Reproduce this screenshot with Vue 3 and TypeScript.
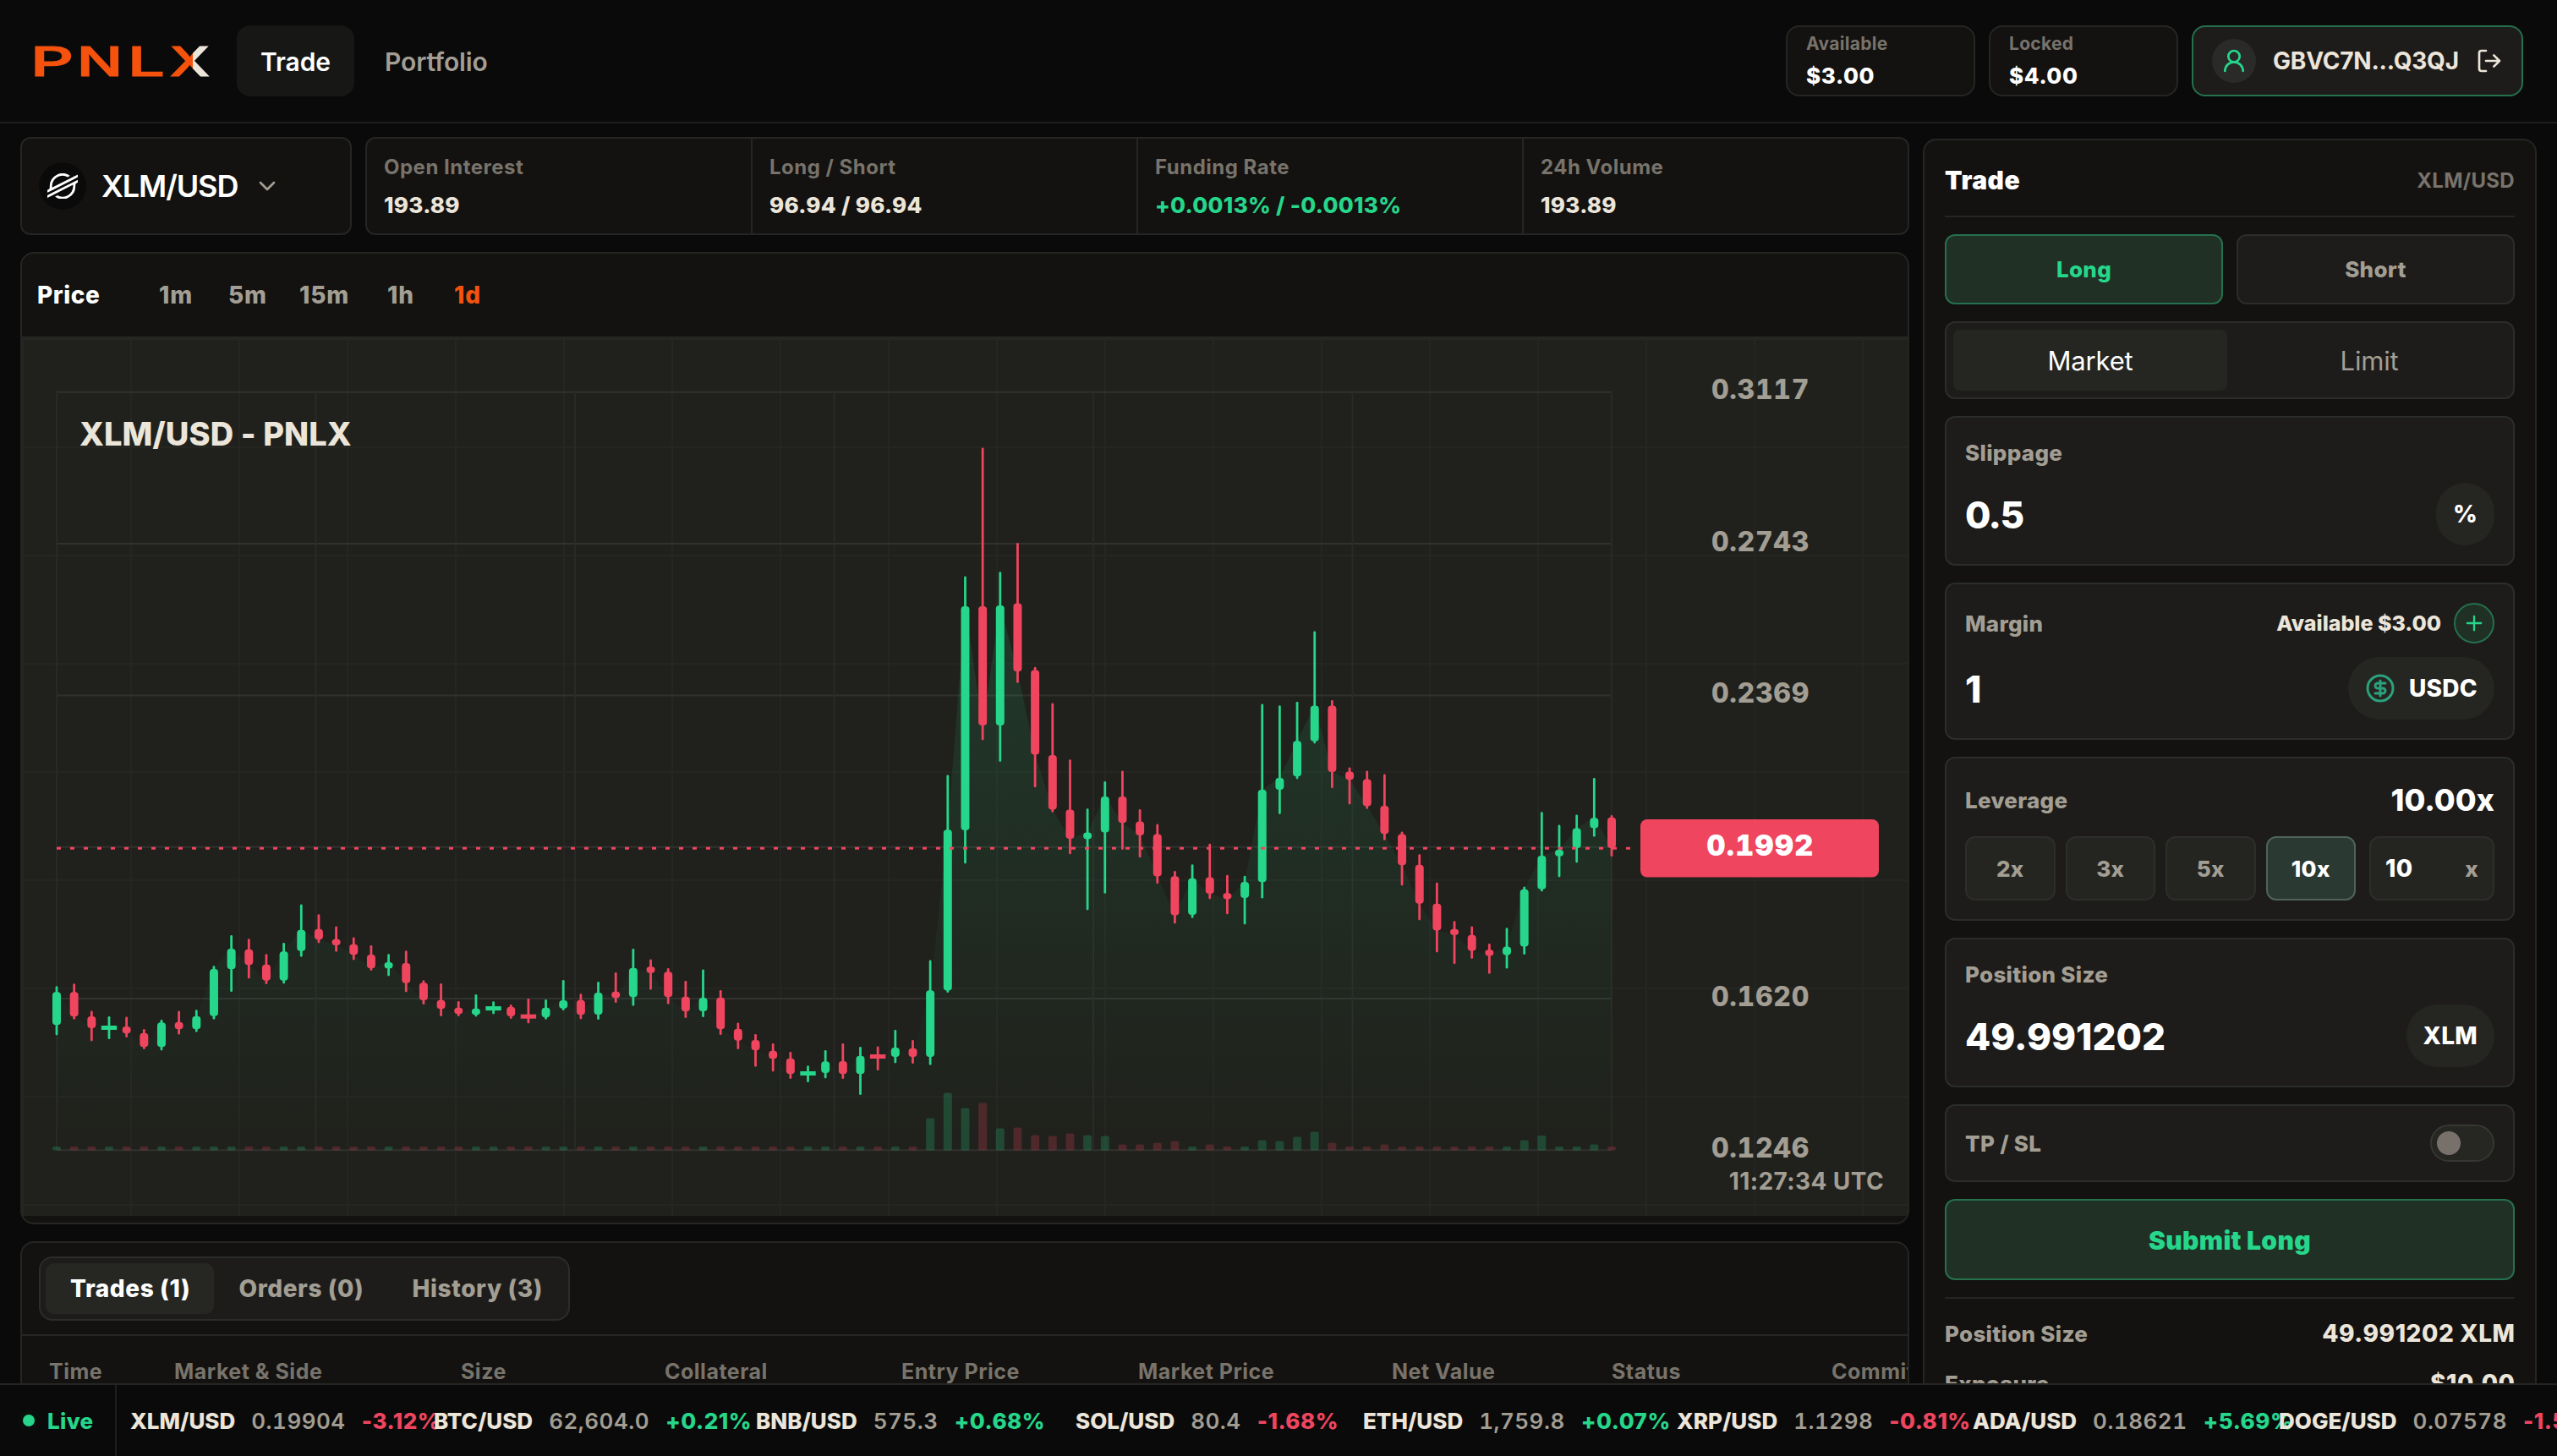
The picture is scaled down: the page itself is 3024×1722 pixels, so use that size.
<script setup lang="ts">
type Side = 'g' | 'r'
type Candle = [side: Side, high: number, top: number, bottom: number, low: number]

const stats = [
  { label: 'Open Interest', value: '193.89', up: false },
  { label: 'Long / Short', value: '96.94 / 96.94', up: false },
  { label: 'Funding Rate', value: '+0.0013% / -0.0013%', up: true },
  { label: '24h Volume', value: '193.89', up: false },
]

const frames = ['1m', '5m', '15m', '1h', '1d']
const tabs = ['Trades (1)', 'Orders (0)', 'History (3)']
const columns = ['Time', 'Market & Side', 'Size', 'Collateral', 'Entry Price', 'Market Price', 'Net Value', 'Status', 'Commitment']
const leverages = ['2x', '3x', '5x', '10x']

const tickers = [
  { pair: 'XLM/USD', price: '0.19904', change: '-3.12%', width: 359 },
  { pair: 'BTC/USD', price: '62,604.0', change: '+0.21%', width: 381 },
  { pair: 'BNB/USD', price: '575.3', change: '+0.68%', width: 378 },
  { pair: 'SOL/USD', price: '80.4', change: '-1.68%', width: 340 },
  { pair: 'ETH/USD', price: '1,759.8', change: '+0.07%', width: 371 },
  { pair: 'XRP/USD', price: '1.1298', change: '-0.81%', width: 350 },
  { pair: 'ADA/USD', price: '0.18621', change: '+5.69%', width: 362 },
  { pair: 'DOGE/USD', price: '0.07578', change: '-1.52%', width: 380 },
]

// Daily candles in chart canvas units.
const candles: Candle[] = [
  ['g', 1167.7, 1173.3, 1212.3, 1223], ['r', 1164.7, 1173.3, 1202.3, 1204.3], ['r', 1197, 1202, 1216, 1230],
  ['g', 1203.3, 1215.3, 1215.9, 1227.7], ['r', 1204, 1214, 1222.3, 1225.7], ['r', 1218.3, 1221.7, 1238.3, 1239.7],
  ['g', 1207.3, 1209.3, 1238.3, 1241], ['r', 1197, 1208.7, 1217.3, 1222.3], ['g', 1195.7, 1201.7, 1217.3, 1219.3],
  ['g', 1143.7, 1146, 1201.7, 1204.3], ['g', 1107.3, 1122, 1146.3, 1171.7], ['r', 1111.7, 1122.7, 1141.3, 1156],
  ['r', 1129.7, 1140.7, 1159.7, 1162.7], ['g', 1116.3, 1125.3, 1159.7, 1162], ['g', 1071, 1099.7, 1124.7, 1130.3],
  ['r', 1082.7, 1098.7, 1111.3, 1114], ['r', 1097, 1110.7, 1118, 1124.3], ['r', 1110, 1116.7, 1129.3, 1134],
  ['r', 1119.3, 1129, 1145.3, 1146.7], ['g', 1129.7, 1138, 1145.3, 1153], ['r', 1125.7, 1139, 1162.7, 1172],
  ['r', 1160.7, 1162.3, 1183, 1186.7], ['r', 1164.3, 1182.7, 1193.3, 1200.7], ['r', 1185.3, 1191.7, 1199.3, 1200.7],
  ['g', 1177.3, 1192.7, 1200.3, 1201], ['g', 1185.7, 1192.4, 1192.8, 1198], ['r', 1189.3, 1190.7, 1202, 1203.7],
  ['r', 1182.3, 1202, 1202.4, 1209], ['g', 1183.3, 1191.7, 1203.3, 1204.3], ['g', 1160.3, 1183, 1192.7, 1193.7],
  ['r', 1176.7, 1182.7, 1200.3, 1204], ['g', 1162.3, 1174, 1200, 1204.7], ['r', 1151.3, 1172.7, 1180.3, 1184.7],
  ['g', 1123.3, 1144.7, 1179.3, 1188.3], ['r', 1136, 1143.3, 1150.7, 1169.3], ['r', 1146.3, 1149.3, 1179.3, 1186.3],
  ['r', 1161.3, 1178.7, 1196.3, 1202.7], ['g', 1148, 1180, 1196, 1201.7], ['r', 1172.3, 1179.7, 1217.3, 1222.7],
  ['r', 1211, 1216.7, 1230.7, 1239.7], ['r', 1224.3, 1230, 1242.3, 1260.3], ['r', 1235.3, 1242.7, 1252.3, 1266],
  ['r', 1245.3, 1251.7, 1270.3, 1274.7], ['g', 1261.7, 1269.3, 1269.7, 1278.7], ['g', 1243.3, 1255.3, 1269, 1274],
  ['r', 1235.3, 1255, 1270.3, 1274.7], ['g', 1239.3, 1248.7, 1270.3, 1293.7], ['r', 1239, 1249.3, 1249.7, 1264.7],
  ['g', 1219.3, 1239, 1250, 1256], ['r', 1231.3, 1239.7, 1250, 1256.7], ['g', 1137, 1171.3, 1250, 1258.3],
  ['g', 917.9, 981.3, 1171.6, 1172.7], ['g', 683, 717, 982.1, 1020.1], ['r', 530.8, 717, 858, 874.1],
  ['g', 677.7, 716.1, 858, 899.6], ['r', 643.3, 713.4, 794.2, 806.3], ['r', 790.2, 792.4, 892.4, 929.9],
  ['r', 833, 892.9, 957.6, 959.4], ['r', 899.6, 957.6, 992, 1008.9], ['g', 957.6, 984.4, 992.4, 1075],
  ['g', 925.4, 942, 984.4, 1055.4], ['r', 912.9, 942, 973.2, 1003.6], ['r', 958.5, 971.4, 987.9, 1012.9],
  ['r', 975.9, 986.6, 1036.6, 1043.8], ['r', 1031.3, 1036.2, 1082.6, 1091.1], ['g', 1023.7, 1038.8, 1082.1, 1084.4],
  ['r', 999.1, 1037.5, 1057.1, 1062.1], ['r', 1036.2, 1056.3, 1063.4, 1079.9], ['g', 1037.1, 1042.9, 1062.1, 1092],
  ['g', 833.9, 933.9, 1043.3, 1061.2], ['g', 835.7, 920.1, 933.9, 961.6], ['g', 831.3, 876.3, 918.3, 920.1],
  ['g', 747.8, 834.4, 876.8, 878.1], ['r', 829.5, 834.4, 912.9, 930.8], ['r', 908.9, 912.5, 922.3, 950],
  ['r', 912.9, 921.4, 953.6, 955.4], ['r', 917, 953.1, 986.2, 992.4], ['r', 984.8, 986.6, 1023.2, 1046],
  ['r', 1011.6, 1022.8, 1068.8, 1087.1], ['r', 1045.1, 1068.8, 1100.4, 1125], ['r', 1090.6, 1098.7, 1105.8, 1138.8],
  ['r', 1096.9, 1105.8, 1124.6, 1132.6], ['r', 1117.4, 1123.2, 1130.4, 1150.4], ['g', 1098.7, 1119.6, 1129.5, 1144.2],
  ['g', 1050, 1051.8, 1119.6, 1127.7], ['g', 961.6, 1012.1, 1051.8, 1053.1], ['g', 976.9, 1004.9, 1012.7, 1036.1],
  ['g', 964.9, 979.6, 1003, 1019.1], ['g', 921.3, 967.2, 979.6, 988.3], ['r', 965.4, 966.8, 1003, 1011.8],
]

const volumes: Record<number, number> = {
  50: 38, 51: 68, 52: 50, 53: 56, 54: 26, 55: 27, 56: 18, 57: 17, 58: 20, 59: 18, 60: 17, 61: 7, 62: 7, 63: 9,
  64: 11, 66: 7, 69: 12, 70: 11, 71: 16, 72: 22, 73: 9, 76: 7, 84: 12, 85: 17.5, 88: 7,
}

const LEFT = 67
const RIGHT = 1906
const BASE = 1360.5
const step = (RIGHT - LEFT) / (candles.length - 1)
const green = '#26d68a'
const red = '#f0455f'

const bars = candles.map(([side, high, top, bottom, low], i) => {
  const flat = bottom - top < 1
  const w = flat ? 18.4 : 10
  const h = flat ? 5 : bottom - top
  const x = LEFT + i * step
  return {
    x,
    high,
    low,
    w,
    h,
    y: top,
    rx: flat ? 0 : Math.min(4, h / 2),
    color: side === 'g' ? green : red,
    close: side === 'g' ? top : bottom,
    vol: volumes[i] ?? 4.6,
  }
})

const area = `M${LEFT} ${BASE} ` + bars.map((b) => `L${b.x.toFixed(1)} ${b.close}`).join(' ') + ` L${RIGHT} ${BASE}Z`
const gridY = [0, 1, 2, 3, 4, 5].map((k) => 463.8 + k * 179.3)
const gridX = [0, 1, 2, 3, 4, 5, 6].map((k) => LEFT + k * 306.5)
const axis = [
  { text: '0.3117', y: 472 },
  { text: '0.2743', y: 651.5 },
  { text: '0.2369', y: 831 },
  { text: '0.1620', y: 1189.5 },
  { text: '0.1246', y: 1369 },
]
</script>

<template>
  <div class="app">
    <header class="top">
      <svg class="logo" width="212" height="76" viewBox="36 34 212 76" role="img" aria-label="PNLX">
        <defs>
          <linearGradient id="split" x1="0" x2="1" y1="0" y2="0">
            <stop offset="0.58" stop-color="#f4520d" />
            <stop offset="0.58" stop-color="#ece5da" />
          </linearGradient>
        </defs>
        <g class="word">
          <text x="36" y="89.5" textLength="51" lengthAdjust="spacingAndGlyphs">P</text>
          <text x="91" y="89.5" textLength="54" lengthAdjust="spacingAndGlyphs">N</text>
          <text x="151" y="89.5" textLength="44" lengthAdjust="spacingAndGlyphs">L</text>
          <text class="mark" x="201" y="89.5" textLength="47" lengthAdjust="spacingAndGlyphs">X</text>
        </g>
      </svg>
      <nav class="nav">
        <a class="nav-item on">Trade</a>
        <a class="nav-item">Portfolio</a>
      </nav>
      <div class="account">
        <div class="balance"><span>Available</span><b>$3.00</b></div>
        <div class="balance"><span>Locked</span><b>$4.00</b></div>
        <button class="wallet">
          <i class="avatar">
            <svg width="32" height="32" viewBox="0 0 24 24" class="line"><circle cx="12" cy="8" r="5" /><path d="M20 21a8 8 0 0 0-16 0" /></svg>
          </i>
          <span>GBVC7N...Q3QJ</span>
          <svg width="32" height="32" viewBox="0 0 24 24" class="line"><path d="M9 21H5a2 2 0 0 1-2-2V5a2 2 0 0 1 2-2h4M16 17l5-5-5-5M21 12H9" /></svg>
        </button>
      </div>
    </header>

    <main class="main">
      <section class="left">
        <div class="market">
          <button class="pair">
            <i class="coin">
              <svg width="36" height="30.5" viewBox="0 0 236.36 200" fill="#fff">
                <path d="M203,26.16l-28.46,14.5-137.43,70a82.49,82.49,0,0,1-.7-10.69A81.87,81.87,0,0,1,158.2,28.6l16.29-8.3,2.43-1.24A100,100,0,0,0,18.18,100q0,3.82.29,7.61a18.19,18.19,0,0,1-9.88,17.58L0,129.57V150l25.29-12.89,0,0,8.19-4.18,8.07-4.11v0L186.43,55l16.28-8.29,33.65-17.15V9.14Z" />
                <path d="M236.36,50,49.78,145,33.5,153.31,0,170.38v20.41l33.27-16.95,28.46-14.5L199.3,89.24A83.45,83.45,0,0,1,200,100,81.87,81.87,0,0,1,78.09,171.36l-1,.53-17.66,9A100,100,0,0,0,218.18,100c0-2.57-.1-5.14-.29-7.68a18.2,18.2,0,0,1,9.87-17.58l8.6-4.38Z" />
              </svg>
            </i>
            <span>XLM/USD</span>
            <svg width="32" height="32" viewBox="0 0 24 24" class="line chev"><path d="m6 9 6 6 6-6" /></svg>
          </button>
          <div class="stats">
            <div v-for="s in stats" :key="s.label" class="stat">
              <span>{{ s.label }}</span>
              <b :class="{ up: s.up }">{{ s.value }}</b>
            </div>
          </div>
        </div>

        <div class="panel chart-panel">
          <div class="chart-head">
            <b>Price</b>
            <div class="frames">
              <span v-for="f in frames" :key="f" :class="{ on: f === '1d' }">{{ f }}</span>
            </div>
          </div>
          <div class="canvas">
            <svg width="2230" height="1038" viewBox="26 400 2230 1038">
              <defs>
                <linearGradient id="fade" gradientUnits="userSpaceOnUse" x1="0" x2="0" y1="717" y2="1345">
                  <stop offset="0" stop-color="#26d68a" stop-opacity="0.13" />
                  <stop offset="1" stop-color="#26d68a" stop-opacity="0" />
                </linearGradient>
              </defs>
              <g stroke="#31322f" stroke-width="2">
                <line v-for="y in gridY" :key="y" :x1="LEFT" :x2="RIGHT" :y1="y" :y2="y" />
              </g>
              <g stroke="#292a27" stroke-width="2">
                <line v-for="x in gridX" :key="x" :x1="x" :x2="x" y1="464" y2="1360" />
              </g>
              <path :d="area" fill="url(#fade)" />
              <rect v-for="(b, i) in bars" :key="'v' + i" :x="b.x - 5" :y="BASE - b.vol" width="10" :height="b.vol" rx="2" :fill="b.color" opacity="0.22" />
              <g v-for="(b, i) in bars" :key="'c' + i">
                <line :x1="b.x" :x2="b.x" :y1="b.high" :y2="b.low" :stroke="b.color" stroke-width="2.8" stroke-linecap="round" />
                <rect :x="b.x - b.w / 2" :y="b.y - (b.w > 12 ? 2.3 : 0)" :width="b.w" :height="b.h" :rx="b.rx" :fill="b.color" />
              </g>
              <line x1="67" x2="1937" y1="1003.3" y2="1003.3" :stroke="red" stroke-width="3" stroke-dasharray="5 11" />
              <text class="title" x="94" y="527">XLM/USD - PNLX</text>
              <text v-for="a in axis" :key="a.text" class="tick" x="2082" :y="a.y">{{ a.text }}</text>
              <rect x="1940" y="969" width="282" height="68.5" rx="8" :fill="red" />
              <text class="tick last" x="2082" y="1012">0.1992</text>
              <text class="clock" x="2228" y="1407">11:27:34 UTC</text>
            </svg>
          </div>
        </div>

        <div class="panel trades">
          <div class="trades-head">
            <div class="tabs">
              <span v-for="(t, i) in tabs" :key="t" :class="{ on: i === 0 }">{{ t }}</span>
            </div>
          </div>
          <div class="cols">
            <span v-for="c in columns" :key="c">{{ c }}</span>
          </div>
        </div>
      </section>

      <aside class="panel ticket">
        <div class="ticket-head"><b>Trade</b><span>XLM/USD</span></div>
        <div class="sides">
          <button class="long">Long</button>
          <button class="short">Short</button>
        </div>
        <div class="kinds"><span class="on">Market</span><span>Limit</span></div>
        <div class="card">
          <div class="row">Slippage</div>
          <div class="entry"><b class="tight">0.5</b><span class="pill">%</span></div>
        </div>
        <div class="card">
          <div class="row tall">
            Margin
            <span class="avail">Available $3.00
              <i class="plus"><svg width="28" height="28" viewBox="0 0 24 24" class="line"><path d="M5 12h14M12 5v14" /></svg></i>
            </span>
          </div>
          <div class="entry">
            <b>1</b>
            <span class="pill">
              <svg width="36" height="36" viewBox="0 0 24 24" class="line usdc"><circle cx="12" cy="12" r="10" /><path d="M16 8h-6a2 2 0 1 0 0 4h4a2 2 0 1 1 0 4H8M12 18V6" /></svg>
              USDC
            </span>
          </div>
        </div>
        <div class="card">
          <div class="row lev">Leverage<b>10.00x</b></div>
          <div class="levers">
            <span v-for="l in leverages" :key="l" :class="['lever', { on: l === '10x' }]">{{ l }}</span>
            <span class="custom"><b>10</b><i>x</i></span>
          </div>
        </div>
        <div class="card">
          <div class="row">Position Size</div>
          <div class="entry"><b>49.991202</b><span class="pill">XLM</span></div>
        </div>
        <div class="card tpsl">TP / SL<i class="toggle"></i></div>
        <button class="submit">Submit Long</button>
        <div class="summary">
          <div><span>Position Size</span><b>49.991202 XLM</b></div>
          <div><span>Exposure</span><b>$10.00</b></div>
        </div>
      </aside>
    </main>

    <footer class="ticker">
      <div class="live"><i></i>Live</div>
      <div class="tape">
        <div v-for="t in tickers" :key="t.pair" class="quote" :style="{ width: t.width + 'px' }">
          <b>{{ t.pair }}</b>
          <span>{{ t.price }}</span>
          <em :class="{ down: t.change[0] === '-' }">{{ t.change }}</em>
        </div>
      </div>
    </footer>
  </div>
</template>

<style>
body {
  background: #0a0a0a;
}
</style>

<style scoped>
* {
  box-sizing: border-box;
}
.app {
  display: flex;
  flex-direction: column;
  width: 3024px;
  height: 1722px;
  overflow: hidden;
  background: #0a0a0a;
  color: #ece5da;
  font-family: Inter, sans-serif;
  font-size: 26px;
  font-weight: 800;
  letter-spacing: 0.3px;
  white-space: nowrap;
}
i,
em {
  font-style: normal;
}
b {
  font-weight: 800;
}
button {
  font: inherit;
  letter-spacing: inherit;
  color: inherit;
  padding: 0;
}
svg {
  display: block;
  flex: none;
}
.line {
  fill: none;
  stroke: currentColor;
  stroke-width: 2;
  stroke-linecap: round;
  stroke-linejoin: round;
}
.top {
  display: flex;
  align-items: center;
  flex: none;
  height: 146px;
  padding: 0 40px 0 36px;
  border-bottom: 2px solid #1e1f1d;
}
.word {
  font-size: 48.5px;
  font-weight: 500;
  letter-spacing: 0;
  fill: #f4520d;
  stroke: #f4520d;
  stroke-width: 1.2;
}
.mark {
  fill: url(#split);
  stroke: url(#split);
}
.nav {
  display: flex;
  gap: 8px;
  margin-left: 32px;
}
.nav-item {
  display: flex;
  align-items: center;
  height: 84px;
  padding: 2px 28px 0;
  border-radius: 16px;
  font-size: 30px;
  font-weight: 600;
  letter-spacing: -0.1px;
  color: #a39e93;
}
.nav-item.on {
  background: #171715;
  color: #fff;
}
.account {
  display: flex;
  gap: 16px;
  margin-left: auto;
}
.balance {
  display: flex;
  flex-direction: column;
  width: 224px;
  height: 84px;
  padding: 6px 22px 0;
  border: 2px solid #252623;
  border-radius: 16px;
  background: #131210;
}
.balance span {
  line-height: 28px;
  font-size: 21px;
  font-weight: 700;
  color: #78736b;
}
.balance b {
  line-height: 48px;
  letter-spacing: 0.6px;
  color: #fff;
}
.wallet {
  display: flex;
  align-items: center;
  width: 392px;
  height: 84px;
  padding: 0 22px;
  border: 2px solid #25704d;
  border-radius: 16px;
  background: #1d1c1a;
  font-size: 28px;
  font-weight: 700;
  letter-spacing: -0.2px;
}
.wallet > svg {
  margin-left: auto;
}
.avatar {
  display: flex;
  align-items: center;
  justify-content: center;
  width: 52px;
  height: 52px;
  margin-right: 20px;
  border-radius: 50%;
  background: #2a2a28;
  color: #26d68a;
}
.main {
  display: flex;
  flex: 1;
  min-height: 0;
  gap: 16px;
  padding: 16px 24px 0;
  overflow: hidden;
}
.left {
  width: 2234px;
  flex: none;
}
.panel {
  border: 2px solid #252623;
  border-radius: 16px;
  background: #131210;
}
.market {
  display: flex;
  gap: 16px;
}
.pair {
  display: flex;
  align-items: center;
  width: 392px;
  height: 116px;
  padding-left: 20px;
  border: 2px solid #252623;
  border-radius: 12px;
  background: #131210;
  font-size: 36px;
  font-weight: 600;
  letter-spacing: -1.1px;
  color: #fff;
}
.coin {
  display: flex;
  align-items: center;
  justify-content: center;
  width: 56px;
  height: 56px;
  margin-right: 18px;
  border-radius: 50%;
  background: #0a0a0a;
}
.chev {
  margin-left: 19px;
  color: #a39e93;
}
.stats {
  display: flex;
  flex: 1;
  border: 2px solid #252623;
  border-radius: 12px;
  background: #131210;
}
.stat {
  flex: 1;
  display: flex;
  flex-direction: column;
  justify-content: center;
  padding: 1px 0 0 20px;
  border-left: 2px solid #252623;
}
.stat:first-child {
  border-left: 0;
}
.stat span {
  line-height: 44px;
  font-size: 24px;
  font-weight: 700;
  letter-spacing: 0.5px;
  color: #78736b;
}
.stat b {
  line-height: 46px;
}
.up {
  color: #26d68a;
}
.chart-panel {
  height: 1150px;
  margin-top: 20px;
}
.chart-head {
  display: flex;
  align-items: center;
  height: 100px;
  padding-left: 18px;
  border-bottom: 2px solid #262725;
  font-size: 28px;
}
.chart-head b {
  width: 144px;
  letter-spacing: 0.6px;
  color: #fff;
}
.frames {
  display: grid;
  grid-template-columns: 82px 84px 104px 79px 60px;
  letter-spacing: 0.8px;
  color: #a39e93;
}
.frames .on {
  color: #f4520d;
}
.canvas {
  height: 1038px;
  background-color: #20211c;
  background-image: linear-gradient(90deg, #252622 2px, transparent 2px), linear-gradient(#252622 2px, transparent 2px);
  background-size: 128px 128px;
}
.title {
  font-size: 38px;
  font-weight: 800;
  letter-spacing: 0.1px;
  fill: #ece5da;
}
.tick {
  font-size: 32px;
  font-weight: 800;
  font-variant-numeric: tabular-nums;
  letter-spacing: 0.7px;
  text-anchor: middle;
  fill: #a39e93;
}
.last {
  font-size: 34px;
  font-weight: 900;
  letter-spacing: 1.4px;
  fill: #fff;
}
.clock {
  font-size: 28px;
  font-weight: 700;
  letter-spacing: 0.4px;
  text-anchor: end;
  fill: #a39e93;
}
.trades {
  height: 400px;
  margin-top: 20px;
  overflow: hidden;
}
.trades-head {
  height: 110px;
  padding: 16px 20px;
  border-bottom: 2px solid #262725;
}
.tabs {
  display: flex;
  align-items: center;
  width: 628px;
  height: 76px;
  padding: 0 6px;
  border: 2px solid #2b2d2a;
  border-radius: 16px;
  background: #1d1c1a;
  font-size: 28px;
  letter-spacing: 0.6px;
  color: #a39e93;
}
.tabs span {
  display: flex;
  align-items: center;
  height: 60px;
  padding: 0 28px 0 29px;
  border-radius: 10px;
}
.tabs .on {
  background: #262622;
  color: #fff;
}
.cols {
  display: grid;
  grid-template-columns: 148px 339px 241px 280px 280px 300px 260px 260px 300px;
  padding-left: 32px;
  line-height: 85px;
  font-size: 25px;
  font-weight: 700;
  letter-spacing: 0.5px;
  color: #78736b;
}
.ticket {
  display: flex;
  flex-direction: column;
  gap: 20px;
  flex: none;
  width: 726px;
  height: 1700px;
  margin-top: 2px;
  padding: 24px 24px 0;
}
.ticket > * {
  flex: none;
}
.ticket-head {
  display: flex;
  justify-content: space-between;
  align-items: center;
  height: 67px;
  padding-bottom: 19px;
  border-bottom: 2px solid #252623;
  font-size: 24px;
  font-weight: 700;
  color: #78736b;
}
.ticket-head b {
  font-size: 30px;
  font-weight: 900;
  letter-spacing: 0.5px;
  color: #fff;
}
.sides {
  display: flex;
  gap: 16px;
}
.sides button {
  flex: 1;
  height: 83px;
  border: 2px solid #2b2d2a;
  border-radius: 12px;
  background: #1d1c1a;
  color: #a39e93;
}
.sides .long,
.submit {
  border: 2px solid #25704d;
  background: #203025;
  color: #26d68a;
}
.kinds {
  display: flex;
  gap: 6px;
  height: 92px;
  padding: 8px;
  border: 2px solid #2b2d2a;
  border-radius: 12px;
  background: #1d1c1a;
  font-size: 31px;
  font-weight: 400;
  letter-spacing: -0.2px;
  color: #a39e93;
}
.kinds span {
  display: flex;
  flex: 1;
  align-items: center;
  justify-content: center;
  border-radius: 8px;
}
.kinds .on {
  background: #252522;
  color: #fff;
}
.card {
  padding: 22px;
  border: 2px solid #2b2d2a;
  border-radius: 12px;
  background: #1d1c1a;
  color: #a39e93;
}
.row {
  display: flex;
  justify-content: space-between;
  align-items: center;
  height: 39px;
  margin-bottom: 16px;
}
.row.tall {
  height: 48px;
}
.row.lev {
  height: 54px;
}
.row.lev b {
  font-size: 36px;
  font-weight: 800;
  letter-spacing: 0;
  color: #fff;
}
.avail {
  display: flex;
  align-items: center;
  gap: 15px;
  font-size: 25px;
  letter-spacing: 0;
  color: #ece5da;
}
.plus {
  display: flex;
  align-items: center;
  justify-content: center;
  width: 48px;
  height: 48px;
  border: 2px solid #25704d;
  border-radius: 50%;
  background: #203025;
  color: #26d68a;
}
.entry {
  display: flex;
  justify-content: space-between;
  align-items: center;
  height: 74px;
  color: #fff;
}
.entry b {
  padding-top: 2px;
  font-size: 44px;
  font-weight: 800;
  letter-spacing: 0;
}
.entry .tight {
  letter-spacing: -1.5px;
}
.pill {
  display: flex;
  align-items: center;
  gap: 16px;
  height: 74px;
  padding: 0 20px;
  border-radius: 37px;
  background: #252522;
  font-size: 28px;
}
.usdc {
  color: #2ba17d;
}
.levers {
  display: flex;
  gap: 12px;
}
.lever,
.custom {
  display: flex;
  align-items: center;
  justify-content: center;
  flex: 1;
  height: 76px;
  border: 2px solid #2d2e2b;
  border-radius: 12px;
  background: #242521;
}
.lever.on {
  border-color: #4f6359;
  background: #2a3a32;
  color: #fff;
}
.custom {
  flex: none;
  justify-content: space-between;
  width: 148px;
  margin-left: 4px;
  padding: 0 17px;
}
.custom b {
  font-size: 28px;
  color: #fff;
}
.tpsl {
  display: flex;
  justify-content: space-between;
  align-items: center;
  height: 92px;
}
.toggle {
  width: 76px;
  height: 44px;
  border: 2px solid #363733;
  border-radius: 22px;
  background: radial-gradient(circle at 20px 20px, #78716b 13.5px, transparent 14.5px) #262622;
}
.submit {
  height: 96px;
  padding-top: 1px;
  border-radius: 12px;
  font-size: 30px;
  font-weight: 900;
}
.summary {
  padding-top: 12px;
  border-top: 2px solid #252623;
  color: #a39e93;
}
.summary div {
  display: flex;
  justify-content: space-between;
  line-height: 59px;
}
.summary b {
  font-size: 28px;
  letter-spacing: 0.6px;
  margin-right: -0.6px;
  color: #ece5da;
}
.ticker {
  display: flex;
  flex: none;
  height: 86px;
  border-top: 2px solid #252623;
  background: #0a0a0a;
}
.live {
  display: flex;
  align-items: center;
  width: 138px;
  padding-left: 27px;
  border-right: 2px solid #1e1f1d;
  color: #26d68a;
}
.live i {
  width: 14px;
  height: 14px;
  margin-right: 15px;
  border-radius: 50%;
  background: #26d68a;
  box-shadow: 0 0 16px #26d68a22;
}
.tape {
  display: flex;
  flex: 1;
  min-width: 0;
  padding-left: 16px;
  overflow: hidden;
}
.quote {
  display: flex;
  flex: none;
  align-items: center;
  gap: 19px;
}
.quote b {
  letter-spacing: 0;
}
.quote span {
  font-variant-numeric: tabular-nums;
  letter-spacing: 0.5px;
  font-weight: 600;
  color: #a39e93;
}
.quote em {
  letter-spacing: 0.5px;
  color: #26d68a;
}
.quote .down {
  color: #f0455f;
}
</style>
